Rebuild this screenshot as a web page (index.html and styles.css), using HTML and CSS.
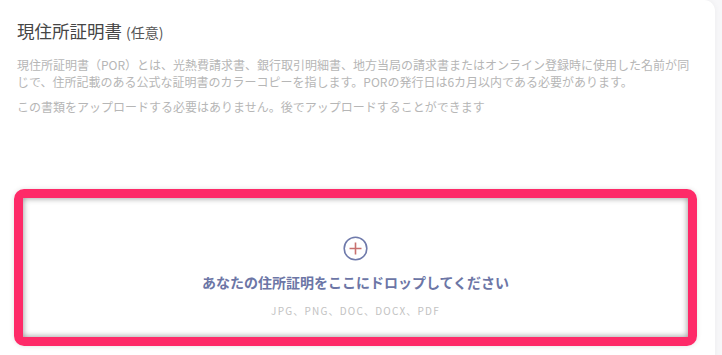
FILE: index.html
```html
<!DOCTYPE html>
<html lang="ja">
<head>
<meta charset="utf-8">
<link rel="stylesheet" href="styles.css">
</head>
<body>
<div class="card">
  <div class="intro">
    <h2 class="title">現住所証明書 <span class="opt">(任意)</span></h2>
    <p class="desc">現住所証明書（POR）とは、光熱費請求書、銀行取引明細書、地方当局の請求書またはオンライン登録時に使用した名前が同じで、住所記載のある公式な証明書のカラーコピーを指します。PORの発行日は6カ月以内である必要があります。</p>
    <p class="desc second">この書類をアップロードする必要はありません。後でアップロードすることができます</p>
  </div>
  <div class="drop">
    <svg class="plus" width="25" height="25" viewBox="0 0 25 25">
      <circle cx="12.5" cy="12.5" r="11.3" fill="none" stroke="#6f7aab" stroke-width="1.6"/>
      <path d="M12.5 6.5v12M6.5 12.5h12" stroke="#c8706e" stroke-width="1.6"/>
    </svg>
    <div class="drop-text">あなたの住所証明をここにドロップしてください</div>
    <div class="formats">JPG、PNG、DOC、DOCX、PDF</div>
  </div>
</div>
</body>
</html>
```

FILE: styles.css
```css
html, body {
  margin: 0;
  padding: 0;
  background: #f7f7f9;
  font-family: "Noto Sans CJK JP", "Noto Sans", sans-serif;
  overflow: hidden;
}
.card {
  width: 715px;
  height: 360px;
  box-sizing: border-box;
  background: #ffffff;
  border-radius: 0 11px 0 0;
  box-shadow: 0 0 6px rgba(0, 0, 0, 0.05);
  padding: 19px 18px 0 14px;
}
.intro {
  padding-left: 3px;
  height: 170px;
}
.title {
  margin: 0;
  font-size: 17.5px;
  line-height: 24px;
  font-weight: 400;
  color: #454545;
}
.opt {
  font-size: 14px;
  color: #555;
}
.desc {
  margin: 12px 0 0;
  font-size: 12px;
  line-height: 17px;
  color: #b6b6b6;
}
.desc.second {
  margin-top: 8px;
}
.drop {
  height: 157px;
  box-sizing: border-box;
  border: 9px solid #fe2a68;
  border-radius: 10px;
  box-shadow: inset 0 0 6px rgba(0, 0, 0, 0.45), 0 0 5px rgba(0, 0, 0, 0.12);
  display: flex;
  flex-direction: column;
  align-items: center;
  padding-top: 38px;
}
.plus {
  display: block;
}
.drop-text {
  margin-top: 11px;
  font-size: 14px;
  font-weight: 700;
  line-height: 20px;
  color: #6c76a6;
}
.formats {
  margin-top: 12px;
  font-size: 10px;
  line-height: 14px;
  letter-spacing: 1.2px;
  color: #c2c2c2;
}
```
